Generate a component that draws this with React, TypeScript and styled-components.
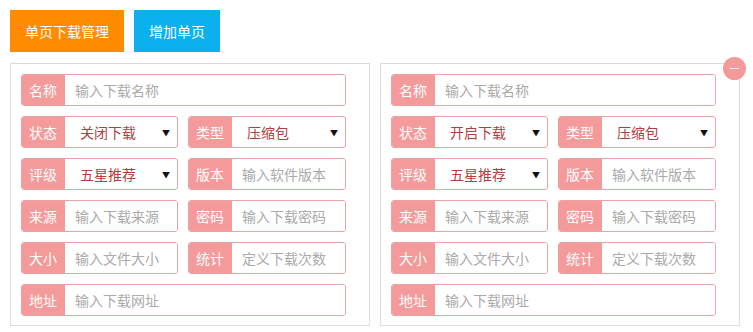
import React from 'react'
import styled, { createGlobalStyle } from 'styled-components'

const Global = createGlobalStyle`
  body {
    margin: 0;
    background: #fff;
    font-family: "Noto Sans CJK SC", "Noto Sans", sans-serif;
    font-size: 14px;
  }
  * { box-sizing: border-box; }
`

const Page = styled.div`
  padding: 10px;
  display: flex;
  flex-direction: column;
  gap: 11px;
`

const Toolbar = styled.div`
  display: flex;
  gap: 10px;
`

const TopButton = styled.button<{ $bg: string }>`
  height: 42px;
  padding: 0 15px;
  border: none;
  background: ${p => p.$bg};
  color: #fff;
  font-family: inherit;
  font-size: 14px;
  line-height: 42px;
`

const Panels = styled.div`
  display: flex;
  gap: 10px;
`

const Panel = styled.div`
  position: relative;
  width: 360px;
  border: 1px solid #dcdcdc;
  padding: 10px 23px 9px 10px;
`

const RemoveBtn = styled.div`
  position: absolute;
  top: -7px;
  right: -7px;
  width: 23px;
  height: 23px;
  border-radius: 50%;
  background: #f59a9a;
  display: flex;
  align-items: center;
  justify-content: center;

  &::after {
    content: '';
    width: 9px;
    height: 1px;
    background: #fff;
  }
`

const Form = styled.div`
  display: grid;
  grid-template-columns: 157px 158px;
  column-gap: 10px;
  row-gap: 10px;
  width: 325px;
`

const Field = styled.div<{ $full?: boolean }>`
  grid-column: ${p => (p.$full ? '1 / span 2' : 'auto')};
  display: flex;
  height: 32px;
  border: 1px solid #e8a4a4;
  border-radius: 3px;
  overflow: hidden;
`

const Label = styled.span`
  flex: 0 0 44px;
  margin: -1px 0 -1px -1px;
  background: #f59a9a;
  color: #fff;
  font-size: 14px;
  line-height: 32px;
  text-align: center;
`

const Input = styled.input`
  flex: 1;
  min-width: 0;
  border: none;
  outline: none;
  padding: 0 10px;
  font-family: inherit;
  font-size: 14px;
  color: #333;
  background: #fff;

  &::placeholder {
    color: #aaa;
  }
`

const Select = styled.div`
  flex: 1;
  display: flex;
  align-items: center;
  justify-content: space-between;
  padding: 0 7px 0 15px;
  color: #b04040;
  font-size: 14px;
`

const Arrow = styled.span`
  color: #111;
  font-size: 8px;
`

type Row =
  | { kind: 'input'; label: string; hint: string; full?: boolean }
  | { kind: 'select'; label: string; value: string }

function rows(status: string): Row[] {
  return [
    { kind: 'input', label: '名称', hint: '输入下载名称', full: true },
    { kind: 'select', label: '状态', value: status },
    { kind: 'select', label: '类型', value: '压缩包' },
    { kind: 'select', label: '评级', value: '五星推荐' },
    { kind: 'input', label: '版本', hint: '输入软件版本' },
    { kind: 'input', label: '来源', hint: '输入下载来源' },
    { kind: 'input', label: '密码', hint: '输入下载密码' },
    { kind: 'input', label: '大小', hint: '输入文件大小' },
    { kind: 'input', label: '统计', hint: '定义下载次数' },
    { kind: 'input', label: '地址', hint: '输入下载网址', full: true },
  ]
}

function DownloadPanel({ status, removable }: { status: string; removable?: boolean }) {
  return (
    <Panel>
      {removable && <RemoveBtn />}
      <Form>
        {rows(status).map(r => (
          <Field key={r.label} $full={r.kind === 'input' && r.full}>
            <Label>{r.label}</Label>
            {r.kind === 'input' ? (
              <Input placeholder={r.hint} />
            ) : (
              <Select>
                <span>{r.value}</span>
                <Arrow>▼</Arrow>
              </Select>
            )}
          </Field>
        ))}
      </Form>
    </Panel>
  )
}

export default function App() {
  return (
    <Page>
      <Global />
      <Toolbar>
        <TopButton $bg="#ff8c00">单页下载管理</TopButton>
        <TopButton $bg="#0cb0ee">增加单页</TopButton>
      </Toolbar>
      <Panels>
        <DownloadPanel status="关闭下载" />
        <DownloadPanel status="开启下载" removable />
      </Panels>
    </Page>
  )
}
